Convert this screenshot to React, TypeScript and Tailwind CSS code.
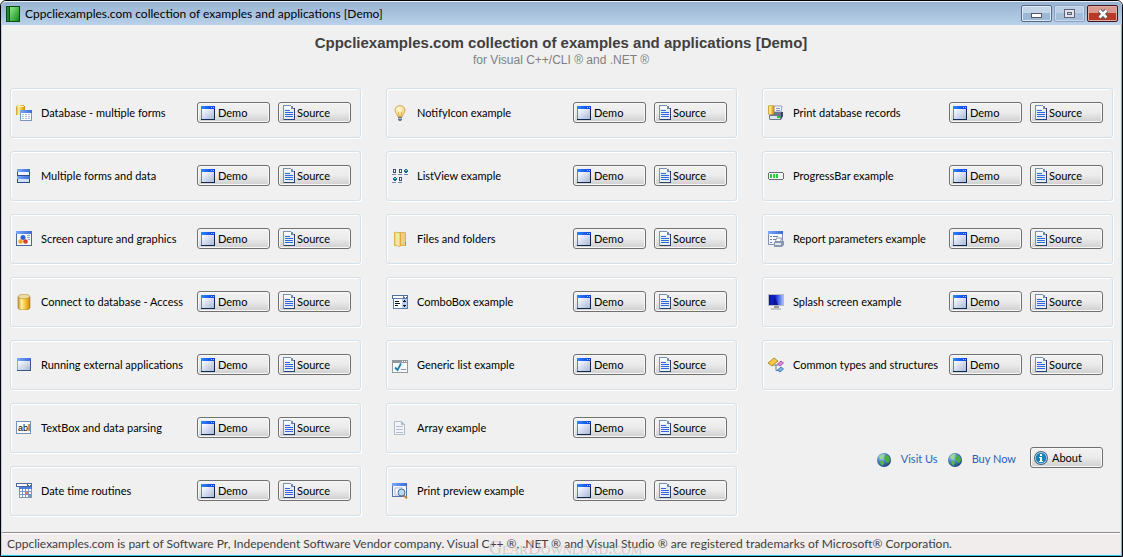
import type { ReactNode } from "react";

// Petite base commune pour toutes les icônes 16x16
function Svg({ children, w = 16, h = 16, crisp = true }: { children: ReactNode; w?: number; h?: number; crisp?: boolean }) {
  return (
    <svg
      width={w}
      height={h}
      viewBox={`0 0 ${w} ${h}`}
      shapeRendering={crisp ? "crispEdges" : "auto"}
      aria-hidden="true"
      className="shrink-0"
    >
      {children}
    </svg>
  );
}

// Dégradés partagés
function Gradients() {
  return (
    <svg width="0" height="0" className="absolute" aria-hidden="true">
      <defs>
        <linearGradient id="gold" x1="0" x2="1" y1="0" y2="0">
          <stop offset="0" stopColor="#c99a2e" />
          <stop offset="0.3" stopColor="#fff0a0" />
          <stop offset="0.65" stopColor="#f2bd35" />
          <stop offset="1" stopColor="#c98a10" />
        </linearGradient>
        <linearGradient id="pane" x1="0" x2="1" y1="0" y2="1">
          <stop offset="0" stopColor="#ffffff" />
          <stop offset="1" stopColor="#a9b9d6" />
        </linearGradient>
        <linearGradient id="bar" x1="0" x2="1" y1="0" y2="0">
          <stop offset="0" stopColor="#2f86ff" />
          <stop offset="1" stopColor="#0a3fd0" />
        </linearGradient>
        <linearGradient id="softBar" x1="0" x2="1" y1="0" y2="0">
          <stop offset="0" stopColor="#7aaaf8" />
          <stop offset="1" stopColor="#3a6bd8" />
        </linearGradient>
        <linearGradient id="book" x1="0" x2="1" y1="0" y2="1">
          <stop offset="0" stopColor="#8ee88a" />
          <stop offset="1" stopColor="#128a1c" />
        </linearGradient>
        <linearGradient id="screen" x1="0" x2="1" y1="0" y2="0">
          <stop offset="0" stopColor="#0a12a8" />
          <stop offset="0.5" stopColor="#1a2fd0" />
          <stop offset="1" stopColor="#9cc0ff" />
        </linearGradient>
        <radialGradient id="globe" cx="0.35" cy="0.3" r="0.75">
          <stop offset="0" stopColor="#b5d8f5" />
          <stop offset="0.5" stopColor="#4a82c0" />
          <stop offset="1" stopColor="#1d4272" />
        </radialGradient>
        <radialGradient id="bulb" cx="0.4" cy="0.35" r="0.7">
          <stop offset="0" stopColor="#fffbe0" />
          <stop offset="1" stopColor="#f3cc62" />
        </radialGradient>
      </defs>
    </svg>
  );
}

const BookIcon = () => (
  <Svg w={14} h={16}>
    <rect x="0" y="0" width="14" height="16" fill="#0b4a10" />
    <rect x="1" y="1" width="2" height="14" fill="#1c8a26" />
    <rect x="4" y="1" width="9" height="14" fill="url(#book)" />
  </Svg>
);

const DemoIcon = () => (
  <Svg w={14} h={14}>
    <rect width="14" height="14" fill="#12294f" />
    <rect width="13" height="13" fill="#6a83b0" />
    <rect x="1" y="3" width="12" height="10" fill="url(#pane)" />
    <rect width="14" height="3" fill="url(#bar)" />
    <rect x="10" y="1" width="1" height="1" fill="#8fd0ff" />
    <rect x="12" y="1" width="1" height="1" fill="#8fd0ff" />
  </Svg>
);

const SourceIcon = () => (
  <Svg w={12} h={15}>
    <path d="M0 0h8v1h2v2h2v12H0z" fill="#7a8fb4" />
    <path d="M1 1h7v3h3v10H1z" fill="#e6eefb" />
    <path d="M1 1h7v3H1z" fill="#f8fbff" />
    <path d="M8 1h1v1h1v1h1v1H8z" fill="#6f86ae" />
    <path d="M11 3h1v12H1v-1h10z" fill="#2b4270" />
    <path d="M2 5h5v1H2zM2 7h8v1H2zM2 9h8v1H2zM2 11h8v1H2z" fill="#2f66dc" />
  </Svg>
);

const InfoIcon = () => (
  <Svg w={14} h={14} crisp={false}>
    <circle cx="7" cy="7" r="7" fill="#4c6473" />
    <circle cx="7" cy="7" r="6" fill="#bfe2f4" />
    <circle cx="7" cy="7" r="5.300" fill="#1583bd" />
    <path d="M6 3h2v2H6zM5 6h3v4h1v1H5v-1h1V7H5z" fill="#fff" />
  </Svg>
);

const GlobeIcon = () => (
  <Svg w={14} h={14} crisp={false}>
    <circle cx="7" cy="7" r="7" fill="url(#globe)" />
    <path d="M2 3.500Q4 .8 7.500 1L7 3 5.500 4.500 5 6.500 3.500 6z" fill="#9ad88a" />
    <path d="M8 2.500l3.500.5 1.700 3.500-1.200 3-2 .5-1.500-2L7 6z" fill="#4aae42" />
    <path d="M3 7.500l3 .8.800 2L5.500 12.800 3.500 11z" fill="#58b850" />
  </Svg>
);

const DbFormsIcon = () => (
  <Svg>
    <path d="M0 1h1V0h7v1h1v9H0z" fill="url(#gold)" />
    <path d="M1 1h7v1H1z" fill="#fff4b8" />
    <rect x="4" y="5" width="12" height="11" fill="#7f95bd" />
    <rect x="5" y="8" width="10" height="7" fill="#fff" />
    <rect x="4" y="5" width="12" height="3" fill="url(#softBar)" />
    <path d="M6 9h2v1H6zM9 9h2v1H9zM12 9h2v1h-2zM6 11h2v1H6zM9 11h2v1H9zM12 11h2v1h-2zM6 13h2v1H6zM9 13h2v1H9zM12 13h2v1h-2z" fill="#a9bbe0" />
  </Svg>
);

const MultiFormsIcon = () => (
  <Svg>
    <rect x="1" y="1" width="13" height="7" fill="#2c4a88" />
    <rect x="1" y="1" width="13" height="3" fill="url(#softBar)" />
    <rect x="2" y="4" width="11" height="3" fill="#eef3fc" />
    <rect x="1" y="8" width="13" height="7" fill="#2c4a88" />
    <rect x="1" y="8" width="13" height="3" fill="url(#softBar)" />
    <rect x="2" y="11" width="11" height="3" fill="#d4e0f6" />
  </Svg>
);

const CaptureIcon = () => (
  <Svg crisp={false}>
    <rect width="16" height="15" fill="#4d6796" />
    <rect x="1" y="3" width="14" height="11" fill="#f4f8ff" />
    <rect width="16" height="3" fill="url(#softBar)" />
    <circle cx="7" cy="6.500" r="2.500" fill="#2d62d4" />
    <circle cx="4.500" cy="10.500" r="2.300" fill="#eda923" />
    <circle cx="9.500" cy="10.500" r="2.300" fill="#dc3c28" />
    <path d="M11 4h3v1h-3zM11 6h3v1h-3zM12 8h2v1h-2z" fill="#8aa4d0" />
  </Svg>
);

const DatabaseIcon = () => (
  <Svg crisp={false}>
    <path d="M2 2.500v11Q2 16 8 16t6-2.500v-11z" fill="url(#gold)" />
    <path d="M2 2.500v11Q2 16 8 16t6-2.500v-11" fill="none" stroke="#a9751a" strokeWidth="0.6" />
    <ellipse cx="8" cy="2.500" rx="5.700" ry="2.200" fill="#f0dca0" stroke="#b08a3a" strokeWidth="0.6" />
  </Svg>
);

const WindowIcon = () => (
  <Svg>
    <rect x="1" y="1" width="14" height="13" fill="#3b5688" />
    <rect x="1" y="1" width="13" height="12" fill="#8fa5cf" />
    <rect x="2" y="4" width="12" height="9" fill="url(#pane)" />
    <rect x="1" y="1" width="14" height="3" fill="url(#softBar)" />
  </Svg>
);

const TextBoxIcon = () => (
  <Svg>
    <rect x="0" y="1" width="15" height="13" fill="#6f93bd" />
    <rect x="1" y="2" width="13" height="11" fill="#fff" />
    <text x="2" y="11" fontSize="9" fontFamily="Liberation Sans, sans-serif" fill="#000">abl</text>
  </Svg>
);

const CalendarIcon = () => (
  <Svg>
    <rect x="0" y="0" width="16" height="4" fill="#4a6c96" />
    <rect x="1" y="1" width="10" height="2" fill="#fff" />
    <path d="M12 1h3v1h-3zM13 2h1v1h-1z" fill="#fff" />
    <rect x="3" y="4" width="13" height="11" fill="#7c96be" />
    <rect x="3" y="4" width="13" height="2" fill="#4a80e4" />
    <path d="M4 6h2v2H4zM7 6h2v2H7zM10 6h2v2h-2zM13 6h2v2h-2zM4 9h2v2H4zM7 9h2v2H7zM13 9h2v2h-2zM4 12h2v2H4zM7 12h2v2H7zM10 12h2v2h-2z" fill="#fff" />
    <rect x="10" y="9" width="2" height="2" fill="#f0714a" />
  </Svg>
);

const BulbIcon = () => (
  <Svg crisp={false}>
    <path d="M8 .5a5 5 0 0 1 5 5c0 2.500-2.500 3.500-2.700 6H5.700C5.500 9 3 8 3 5.500a5 5 0 0 1 5-5z" fill="url(#bulb)" stroke="#c99a45" strokeWidth="0.8" />
    <path d="M7 11l-.6-4M9 11l.6-4" stroke="#d8a848" strokeWidth="0.7" />
    <path d="M6 12h4v2.500L9 16H7l-1-1.500z" fill="#64768c" />
    <path d="M6 13h4v.7H6z" fill="#c9d3de" />
  </Svg>
);

const ListViewIcon = () => (
  <Svg>
    <path d="M1 1h3v4H1zM7 1h3v4H7zM7 9h3v4H7z" fill="#3b4d70" />
    <path d="M2 2h1v2H2zM8 2h1v2H8zM8 10h1v2H8z" fill="#fff" />
    <path d="M13 1h2v1h1v2h-1v1h-2V4h-1V2h1zM2 9h2v1h1v2H4v1H2v-1H1v-2h1z" fill="#16658a" />
    <path d="M13 2h2v1h-2zM2 10h2v1H2z" fill="#4fe0d8" />
    <path d="M0 6h4v1H0zM6 6h4v1H6zM12 6h4v1h-4zM0 14h4v1H0zM6 14h4v1H6z" fill="#7088ae" />
  </Svg>
);

const FolderIcon = () => (
  <Svg crisp={false}>
    <path d="M2 1h5v14H2z" fill="#e3bd58" />
    <path d="M7 1h6l1 1v13H7z" fill="#dbb04a" />
    <path d="M3 1l5 1v14l-5-2z" fill="#f8e6a0" stroke="#cfa748" strokeWidth="0.6" />
    <path d="M9 2h4v12H9z" fill="#edd07c" />
    <path d="M13 11h1v3h-1z" fill="#4fa0d0" />
  </Svg>
);

const ComboIcon = () => (
  <Svg>
    <rect y="1" width="16" height="4" fill="#4f7396" />
    <rect x="1" y="2" width="10" height="2" fill="#fff" />
    <path d="M12 2h3v1h-3zM13 3h1v1h-1z" fill="#fff" />
    <rect x="1" y="4" width="15" height="11" fill="#5b80ad" />
    <rect x="2" y="5" width="8" height="9" fill="#fff" />
    <rect x="10" y="5" width="5" height="9" fill="#b9cdf4" />
    <path d="M3 7h4v1H3zM3 9h5v1H3zM3 11h3v1H3zM12 6h1v1h-1zM11 7h3v1h-3zM11 11h3v1h-3zM12 12h1v1h-1z" fill="#10151f" />
  </Svg>
);

const CheckListIcon = () => (
  <Svg crisp={false}>
    <rect x="0" y="3" width="16" height="13" fill="#94999f" />
    <rect x="1" y="6" width="14" height="9" fill="#f8fafb" />
    <path d="M10 4h1v1h-1zM12 4h1v1h-1zM14 4h1v1h-1z" fill="#fff" />
    <path d="M3 10.500L5.500 13 9 6.500" fill="none" stroke="#1c7fb0" strokeWidth="1.800" />
    <path d="M9 12h5v1H9z" fill="#8890b0" />
  </Svg>
);

const PageIcon = () => (
  <Svg>
    <path d="M2 1h8v1h1v1h1v1h1v11H2z" fill="#b4bccc" />
    <path d="M3 2h6v3h3v9H3z" fill="#f3f5fa" />
    <path d="M4 6h7v1H4zM4 9h7v1H4zM4 12h7v1H4z" fill="#b4bccf" />
  </Svg>
);

const PreviewIcon = () => (
  <Svg crisp={false}>
    <rect width="15" height="14" fill="#5774a8" />
    <rect x="1" y="3" width="13" height="10" fill="#f3f7ff" />
    <rect width="15" height="3" fill="url(#softBar)" />
    <rect x="3" y="5" width="7" height="7" fill="#fff" stroke="#9bacc9" strokeWidth="0.8" />
    <path d="M11.500 12l3.500 3.500" stroke="#c48f2c" strokeWidth="2" />
    <circle cx="9.500" cy="9.500" r="3.500" fill="#b5dcf4" stroke="#4c6a94" />
  </Svg>
);

const PrintDbIcon = () => (
  <Svg crisp={false}>
    <path d="M6 1h8l-1 6H6z" fill="#f6f9fd" stroke="#7d8ca8" strokeWidth="0.8" />
    <path d="M8 3h4v1H8zM8 5h4v1H8z" fill="#7893c4" />
    <path d="M1 10l3-3h11v4l-2 4H2l-1-1z" fill="#66778f" />
    <path d="M2 11h10v3H2z" fill="#dde4ec" />
    <path d="M13 7h2v4l-2 3z" fill="#35455f" />
    <path d="M9 11h3v2H9z" fill="#22c832" />
    <path d="M0 1Q3 -.5 6 1v8Q3 10.500 0 9z" fill="url(#gold)" stroke="#b2852a" strokeWidth="0.500" />
  </Svg>
);

const ProgressIcon = () => (
  <Svg>
    <path d="M1 4h14v1h1v6h-1v1H1v-1H0V5h1z" fill="#65696f" />
    <rect x="1" y="5" width="14" height="6" fill="#fbfdfb" />
    <path d="M2 6h2v4H2zM5 6h2v4H5zM8 6h2v4H8z" fill="#2fc83a" />
  </Svg>
);

const ReportIcon = () => (
  <Svg crisp={false}>
    <rect width="15" height="14" fill="#8193b4" />
    <rect x="1" y="3" width="13" height="10" fill="#f7f9fd" />
    <rect width="15" height="3" fill="url(#softBar)" />
    <path d="M2 5h2v1H2zM5 5h5v1H5zM2 8h2v1H2zM5 8h4v1H5zM2 11h2v1H2z" fill="#6c80a8" />
    <path d="M8.500 7h5l-1 4h-5z" fill="#fff" stroke="#72829c" strokeWidth="0.800" />
    <path d="M6 11l2-1h8v4l-2 2H6z" fill="#8998b0" />
    <path d="M7 12h6v2H7z" fill="#e3e9f1" />
  </Svg>
);

const MonitorIcon = () => (
  <Svg crisp={false}>
    <rect y="0" width="16" height="12" fill="#b9bcc0" />
    <rect x="1" y="1" width="14" height="10" fill="url(#screen)" />
    <path d="M6 1l4 10H5z" fill="#0b1690" />
    <path d="M6 12h5v2H6z" fill="#999c9f" />
    <path d="M3 14h10v2H3z" fill="#c4c6c8" />
  </Svg>
);

const StructIcon = () => (
  <Svg crisp={false}>
    <path d="M5 8h5M8 8v5.500h3" fill="none" stroke="#6e7c94" />
    <path d="M0 6l6-5 4 3-6 5z" fill="#f6c840" stroke="#a87b1c" strokeWidth="0.800" />
    <path d="M9.500 7l3.500-3 2.500 2-3.500 3z" fill="#e087e0" stroke="#8f3f96" strokeWidth="0.800" />
    <path d="M9.500 13l3.500-3 2.500 2-3.500 3z" fill="#70b4f0" stroke="#2c64a4" strokeWidth="0.800" />
  </Svg>
);

interface IExample {
  name: string;
  icon: ReactNode;
}

const columns: IExample[][] = [
  [
    { name: "Database - multiple forms", icon: <DbFormsIcon /> },
    { name: "Multiple forms and data", icon: <MultiFormsIcon /> },
    { name: "Screen capture and graphics", icon: <CaptureIcon /> },
    { name: "Connect to database - Access", icon: <DatabaseIcon /> },
    { name: "Running external applications", icon: <WindowIcon /> },
    { name: "TextBox and data parsing", icon: <TextBoxIcon /> },
    { name: "Date time routines", icon: <CalendarIcon /> },
  ],
  [
    { name: "NotifyIcon example", icon: <BulbIcon /> },
    { name: "ListView example", icon: <ListViewIcon /> },
    { name: "Files and folders", icon: <FolderIcon /> },
    { name: "ComboBox example", icon: <ComboIcon /> },
    { name: "Generic list example", icon: <CheckListIcon /> },
    { name: "Array example", icon: <PageIcon /> },
    { name: "Print preview example", icon: <PreviewIcon /> },
  ],
  [
    { name: "Print database records", icon: <PrintDbIcon /> },
    { name: "ProgressBar example", icon: <ProgressIcon /> },
    { name: "Report parameters example", icon: <ReportIcon /> },
    { name: "Splash screen example", icon: <MonitorIcon /> },
    { name: "Common types and structures", icon: <StructIcon /> },
  ],
];

function PushButton({ icon, children, gap }: { icon: ReactNode; children: ReactNode; gap: string }) {
  return (
    <button
      type="button"
      className={`flex h-[21px] w-[73px] shrink-0 items-center rounded-[3px] border border-[#707070] bg-linear-to-b from-[#f2f2f2] from-0% via-[#ebebeb] via-50% to-[#cfcfcf] to-100% text-[11px] leading-none text-black shadow-[inset_0_0_0_1px_#f8f8f8] ${gap}`}
    >
      {icon}
      <span>{children}</span>
    </button>
  );
}

function ExampleBox({ name, icon }: IExample) {
  return (
    <section className="flex h-[50px] items-center rounded-[3px] border border-[#d5dfe5] pr-[9px] pb-px pl-[5px] shadow-[inset_1px_1px_0_#fff,1px_1px_0_#fff]">
      {icon}
      <span className="ml-[9px] flex-1 text-[11px] leading-[15px] whitespace-nowrap text-black">{name}</span>
      <div className="flex gap-2">
        <PushButton icon={<DemoIcon />} gap="pl-[3px] gap-[3px]">Demo</PushButton>
        <PushButton icon={<SourceIcon />} gap="pl-1 gap-[2px]">Source</PushButton>
      </div>
    </section>
  );
}

export default function App() {
  return (
    <div className="flex min-h-screen flex-col overflow-hidden rounded-t-[6px] border border-black bg-[#f0f0f0] font-[Lato,sans-serif]">
      <Gradients />

      {/* Barre de titre */}
      <header className="flex h-6 items-center rounded-t-[5px] border-t border-[#e8f1fa] bg-linear-to-b from-[#98b3d1] to-[#b9d1ea] pr-1 pl-[5px]">
        <BookIcon />
        <span className="ml-[5px] flex-1 text-[12px] text-black">
          Cppcliexamples.com collection of examples and applications [Demo]
        </span>
        <div className="flex gap-[2px]">
          <button type="button" aria-label="Minimize" className="flex h-[17px] w-[31px] items-center justify-center rounded-[2px] border border-[#566b8a] bg-linear-to-b from-[#c4d5e8] from-50% to-[#9db8d4] to-50% pt-1 shadow-[inset_0_0_0_1px_#dce8f4]">
            <Svg w={11} h={5}>
              <rect width="11" height="5" fill="#535666" />
              <rect x="1" y="1" width="9" height="3" fill="#fff" />
            </Svg>
          </button>
          <button type="button" aria-label="Maximize" className="flex h-[17px] w-[31px] items-center justify-center rounded-[2px] border border-[#8ba2c0] bg-linear-to-b from-[#bccfe5] from-50% to-[#a5bfdb] to-50% shadow-[inset_0_0_0_1px_#c9daec]">
            <Svg w={11} h={9}>
              <rect width="11" height="9" fill="#5f6577" />
              <rect x="1" y="1" width="9" height="7" fill="#e0e4ec" />
              <rect x="3" y="3" width="5" height="3" fill="#5f6577" />
              <rect x="4" y="4" width="3" height="1" fill="#b4c8de" />
            </Svg>
          </button>
          <button type="button" aria-label="Close" className="flex h-[17px] w-[31px] items-center justify-center rounded-[2px] border border-[#431422] bg-linear-to-b from-[#d9998e] from-50% to-[#b83a26] to-50% shadow-[inset_0_0_0_1px_#e3aca2]">
            <Svg w={12} h={10} crisp={false}>
              <path d="M2.500 1.500l7 7M9.500 1.500l-7 7" stroke="#535666" strokeWidth="4.500" />
              <path d="M2.500 1.500l7 7M9.500 1.500l-7 7" stroke="#fff" strokeWidth="2.500" />
            </Svg>
          </button>
        </div>
      </header>

      <div className="flex flex-1 flex-col border-r border-b border-l border-r-[#45c8ee] border-b-[#35c3dc] border-l-[#b9d1ea] bg-[#dcebf6] pr-px pb-px">
        <div className="flex flex-1 flex-col bg-[#f0f0f0]">
          {/* Titre */}
          <div className="pt-[9px] text-center font-['Liberation_Sans',Arial,sans-serif]">
            <h1 className="text-[15px] leading-[18px] font-bold text-[#404040]">
              Cppcliexamples.com collection of examples and applications [Demo]
            </h1>
            <p className="text-[12px] leading-[16px] text-[#808080]">for Visual C++/CLI ® and .NET ®</p>
          </div>

          {/* Liste des exemples */}
          <main className="grid flex-1 grid-cols-3 gap-x-[25px] pt-5 pr-[7px] pb-4 pl-2">
            {columns.map((examples, i) => (
              <div key={i} className="flex flex-col gap-[13px]">
                {examples.map((example) => (
                  <ExampleBox key={example.name} {...example} />
                ))}
                {i === 2 && (
                  <div className="flex items-center justify-end gap-[14px] pt-11 pr-[10px]">
                    <div className="flex items-center gap-[10px] pt-1 text-[11px] text-[#2a62b8]">
                      <GlobeIcon />
                      <a href="#visit">Visit Us</a>
                      <GlobeIcon />
                      <a href="#buy">Buy Now</a>
                    </div>
                    <PushButton icon={<InfoIcon />} gap="pl-[3px] gap-1">About</PushButton>
                  </div>
                )}
              </div>
            ))}
          </main>

          {/* Barre d'état */}
          <footer className="relative h-[22px] border-t border-[#8c8c8c] bg-[#f1edec] pl-[5px] text-[12px] leading-[22px] whitespace-nowrap text-[#404040] shadow-[inset_0_1px_0_#fff]">
            Cppcliexamples.com is part of Software Pr, Independent Software Vendor company. Visual C++ ®, .NET ® and Visual Studio ® are registered trademarks of Microsoft® Corporation.
            <span className="absolute top-[9px] left-[487px] font-['Liberation_Serif',serif] text-[18px] leading-[13px] text-[#b8b4b4]/60 [font-variant:small-caps]">
              GearDownload.com
            </span>
          </footer>
        </div>
      </div>
    </div>
  );
}
